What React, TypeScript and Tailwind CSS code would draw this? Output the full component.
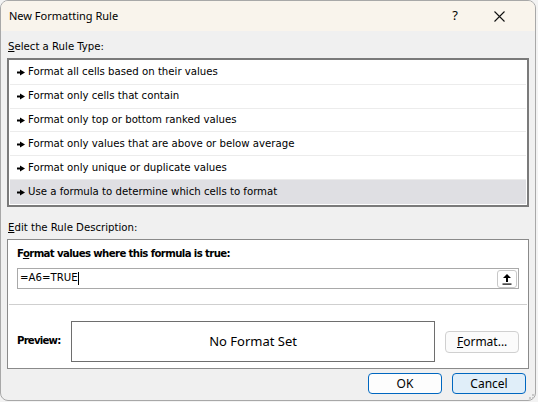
import React from "react";

const rules = [
  "Format all cells based on their values",
  "Format only cells that contain",
  "Format only top or bottom ranked values",
  "Format only values that are above or below average",
  "Format only unique or duplicate values",
  "Use a formula to determine which cells to format",
];

function Pointer() {
  return (
    <svg width="8" height="7" viewBox="0 0 8 7" className="shrink-0">
      <rect x="0" y="2.5" width="4" height="2" fill="#000" />
      <polygon points="3,0.5 8,3.5 3,6.5" fill="#000" />
    </svg>
  );
}

export default function App() {
  return (
    <div className="w-[538px] h-[402px] bg-[#f3f3f3]">
      <div className="w-[536px] h-[401px] rounded-[8px] border border-[#a8a8a8] overflow-hidden bg-[#f0f0f0] flex flex-col font-['Segoe_UI','Noto_Sans',sans-serif] text-[12px] text-black">
        {/* title bar */}
        <div className="h-[30px] shrink-0 bg-[#f9f4ec] flex items-center pl-[8px] pr-[14px]">
          <span className="flex-1 text-[11px]">New Formatting Rule</span>
          <span className="w-[44px] text-center text-[13px]">?</span>
          <span className="w-[44px] flex justify-center">
            <svg width="11" height="11" viewBox="0 0 11 11">
              <path d="M0.5 0.5 L10.5 10.5 M10.5 0.5 L0.5 10.5" stroke="#111" strokeWidth="1.1" />
            </svg>
          </span>
        </div>

        <div className="flex flex-col px-[6px] font-['Tahoma','DejaVu_Sans_Condensed',sans-serif] text-[11.3px]">
          <div className="h-[27px] flex items-end pb-[2px] pl-[1px]">
            <span><span className="underline">S</span>elect a Rule Type:</span>
          </div>
          <div className="h-[149px] border-2 border-[#7a7a7a] bg-white p-[1px] flex flex-col">
            {rules.map((r, i) => (
              <div
                key={r}
                className={
                  "h-[24px] flex items-center gap-[3px] pl-[7px] pt-[1px] " +
                  (i === 5 ? "bg-[#dfdfe3]" : "border-b border-[#ececec]")
                }
              >
                <Pointer />
                <span>{r}</span>
              </div>
            ))}
          </div>

          <div className="h-[32px] flex items-end pb-[2px] pl-[1px]">
            <span><span className="underline">E</span>dit the Rule Description:</span>
          </div>
          <div className="h-[130px] border border-[#8a8a8a] bg-white flex flex-col pl-[9px] pr-[9px]">
            <div className="h-[28px] flex items-end pb-[5px] font-bold tracking-[-0.62px]">
              <span>F<span className="underline">o</span>rmat values where this formula is true:</span>
            </div>
            <div className="h-[21px] border border-[#a9a9a9] flex items-center pl-[2px] pr-[1px]">
              <span className="flex-1 flex items-center">
                =A6=TRUE<span className="inline-block w-px h-[13px] bg-black" />
              </span>
              <span className="w-[20px] h-[18px] rounded-[3px] border border-[#c8c8c8] bg-white flex items-center justify-center">
                <svg width="10" height="12" viewBox="0 0 10 12">
                  <path d="M5 1 L9 5 L6 5 L6 9 L4 9 L4 5 L1 5 Z" fill="#000" />
                  <rect x="0.5" y="10.5" width="9" height="1.2" fill="#000" />
                </svg>
              </span>
            </div>
            <div className="h-px bg-[#cfcfcf] mt-[15px] ml-[-8px] mr-[-8px]" />
            <div className="flex items-center mt-[16px]">
              <span className="w-[54px] font-bold tracking-[-0.8px]">Preview:</span>
              <div className="w-[366px] h-[41px] border border-[#6e6e6e] flex items-center justify-center font-['Segoe_UI','Noto_Sans',sans-serif] text-[13px]">
                No Format Set
              </div>
              <button className="ml-[10px] w-[74px] h-[22px] rounded-[4px] border border-[#d0d0d0] bg-[#fbfbfb] font-['Segoe_UI','Noto_Sans',sans-serif] text-[12px]">
                <span className="underline">F</span>ormat...
              </button>
            </div>
          </div>

          <div className="flex justify-end gap-[10px] mt-[4px] pr-[3px]">
            <button className="w-[74px] h-[21px] rounded-[4px] border border-[#0067c0] bg-[#fdfdfd] font-['Segoe_UI','Noto_Sans',sans-serif] text-[12px]">
              OK
            </button>
            <button className="w-[74px] h-[21px] rounded-[4px] border border-[#0067c0] bg-[#e0eef9] font-['Segoe_UI','Noto_Sans',sans-serif] text-[12px]">
              Cancel
            </button>
          </div>
        </div>
        <div className="flex-1 flex justify-end items-end pr-[1px] pb-[1px]">
          <svg width="8" height="8" viewBox="0 0 8 8">
            <rect x="6" y="0" width="2" height="2" fill="#c8c8c8" />
            <rect x="3" y="3" width="2" height="2" fill="#c8c8c8" />
            <rect x="6" y="3" width="2" height="2" fill="#c8c8c8" />
            <rect x="0" y="6" width="2" height="2" fill="#c8c8c8" />
            <rect x="3" y="6" width="2" height="2" fill="#c8c8c8" />
            <rect x="6" y="6" width="2" height="2" fill="#c8c8c8" />
          </svg>
        </div>
      </div>
    </div>
  );
}
